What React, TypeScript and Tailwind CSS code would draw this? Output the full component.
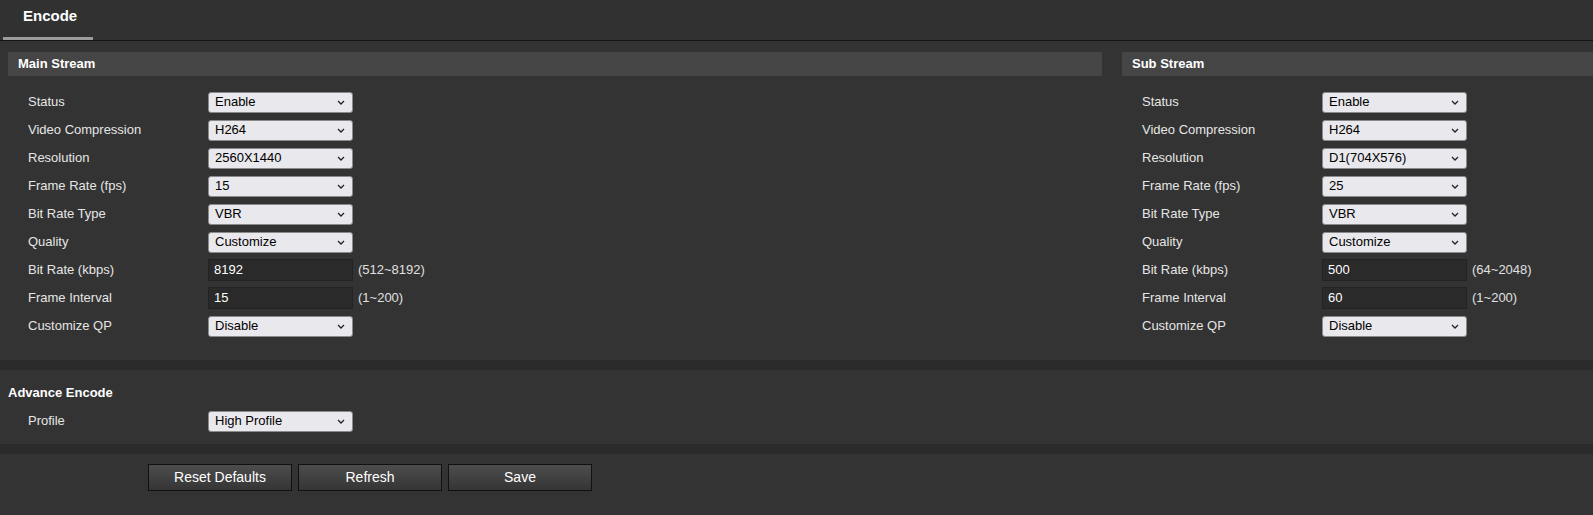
import React from 'react'

type Row = { label: string; value: string; kind: 'select' | 'input'; range?: string }

const MAIN: Row[] = [
  { label: 'Status', value: 'Enable', kind: 'select' },
  { label: 'Video Compression', value: 'H264', kind: 'select' },
  { label: 'Resolution', value: '2560X1440', kind: 'select' },
  { label: 'Frame Rate (fps)', value: '15', kind: 'select' },
  { label: 'Bit Rate Type', value: 'VBR', kind: 'select' },
  { label: 'Quality', value: 'Customize', kind: 'select' },
  { label: 'Bit Rate (kbps)', value: '8192', kind: 'input', range: '(512~8192)' },
  { label: 'Frame Interval', value: '15', kind: 'input', range: '(1~200)' },
  { label: 'Customize QP', value: 'Disable', kind: 'select' },
]

const SUB: Row[] = [
  { label: 'Status', value: 'Enable', kind: 'select' },
  { label: 'Video Compression', value: 'H264', kind: 'select' },
  { label: 'Resolution', value: 'D1(704X576)', kind: 'select' },
  { label: 'Frame Rate (fps)', value: '25', kind: 'select' },
  { label: 'Bit Rate Type', value: 'VBR', kind: 'select' },
  { label: 'Quality', value: 'Customize', kind: 'select' },
  { label: 'Bit Rate (kbps)', value: '500', kind: 'input', range: '(64~2048)' },
  { label: 'Frame Interval', value: '60', kind: 'input', range: '(1~200)' },
  { label: 'Customize QP', value: 'Disable', kind: 'select' },
]

function Select({ value }: { value: string }) {
  return (
    <div className="flex h-[21px] w-[145px] items-center justify-between rounded-[3px] border border-[#8a8a8a] bg-[#e9e8ed] pl-[6px] pr-[7px] text-[13px] text-black">
      <span>{value}</span>
      <svg width="8" height="5" viewBox="0 0 8 5" fill="none">
        <path d="M1 1l3 3 3-3" stroke="#222" strokeWidth="1.3" />
      </svg>
    </div>
  )
}

function Field({ row }: { row: Row }) {
  return (
    <div className="flex h-[28px] items-center">
      <div className="w-[200px] pl-5 text-[13px] text-[#e6e6e6]">{row.label}</div>
      {row.kind === 'select' ? (
        <Select value={row.value} />
      ) : (
        <>
          <div className="flex h-[22px] w-[145px] items-center border border-[#232323] bg-[#2a2a2a] pl-[5px] text-[13px] text-white">
            {row.value}
          </div>
          <span className="ml-[5px] text-[13px] text-[#e0e0e0]">{row.range}</span>
        </>
      )}
    </div>
  )
}

function StreamPanel({ title, rows, className }: { title: string; rows: Row[]; className: string }) {
  return (
    <div className={className}>
      <div className="flex h-[24px] items-center bg-[#454545] pl-[10px] text-[13px] font-bold text-white">{title}</div>
      <div className="pt-3">
        {rows.map((r) => (
          <Field key={r.label} row={r} />
        ))}
      </div>
    </div>
  )
}

export default function App() {
  return (
    <div className="h-[515px] w-full overflow-hidden bg-[#333333] font-['Liberation_Sans',Arial,sans-serif]">
      <div className="flex h-[41px] items-end border-b border-[#161616] bg-[#313131]">
        <div className="ml-[3px] flex h-[40px] w-[90px] items-start border-b-[3px] border-[#9c9c9c] pl-5 pt-[5px] text-[15px] font-bold text-white">
          Encode
        </div>
      </div>

      <div className="flex gap-5 pt-[11px] pb-5">
        <StreamPanel title="Main Stream" rows={MAIN} className="ml-2 w-[1094px]" />
        <StreamPanel title="Sub Stream" rows={SUB} className="flex-1" />
      </div>

      <div className="h-[10px] bg-[#2a2a2a]" />

      <div className="h-[74px] pt-[13px]">
        <div className="pl-2 text-[13px] font-bold leading-5 text-white">Advance Encode</div>
        <div className="ml-2 mt-1">
          <Field row={{ label: 'Profile', value: 'High Profile', kind: 'select' }} />
        </div>
      </div>

      <div className="h-[10px] bg-[#2a2a2a]" />

      <div className="flex gap-[6px] pl-[148px] pt-[10px]">
        {['Reset Defaults', 'Refresh', 'Save'].map((b) => (
          <button
            key={b}
            className="h-[27px] w-[144px] border border-[#111] bg-gradient-to-b from-[#4d4d4d] to-[#353535] text-[14px] text-white"
          >
            {b}
          </button>
        ))}
      </div>
    </div>
  )
}
